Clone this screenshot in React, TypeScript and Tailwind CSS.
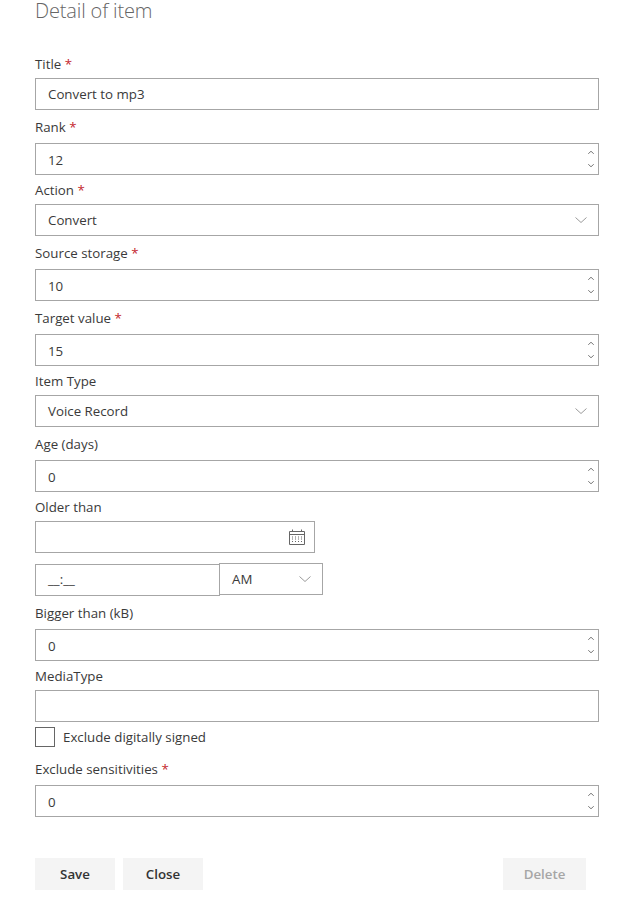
import React from "react";

const Chevron = ({ className, color, weight }: { className: string; color: string; weight: string }) => (
  <svg viewBox="0 0 12 6" fill="none" stroke={color} strokeWidth={weight} className={className}>
    <path d="M0.5 0.5 L6 5.5 L11.5 0.5" />
  </svg>
);

const Label = ({ text, required, className }: { text: string; required?: boolean; className: string }) => (
  <div className={`leading-5 text-[#3a3a3a] ${className}`}>
    {text}
    {required && <span className="text-[#c4262e]"> *</span>}
  </div>
);

const TextBox = ({ value }: { value?: string }) => (
  <div className="h-8 w-[564px] border border-[#a6a6a6] pl-3 pt-[2px] flex items-center text-[#3a3a3a]">{value}</div>
);

const NumberBox = ({ value }: { value: string }) => (
  <div className="h-8 w-[564px] border border-[#a6a6a6] pl-3 pr-1 flex items-center justify-between text-[#3a3a3a]">
    <span className="pt-[3px]">{value}</span>
    <div className="flex flex-col gap-[10px] items-center">
      <Chevron color="#555555" weight="1.6" className="w-[6px] h-[3px] rotate-180" />
      <Chevron color="#555555" weight="1.6" className="w-[6px] h-[3px]" />
    </div>
  </div>
);

const SelectBox = ({ value, className }: { value: string; className: string }) => (
  <div className={`h-8 border border-[#a6a6a6] pl-3 pr-[11px] flex items-center justify-between text-[#3a3a3a] ${className}`}>
    <span className="pt-px">{value}</span>
    <Chevron color="#8f8f8f" weight="0.9" className="w-3 h-[6px]" />
  </div>
);

const CalendarIcon = () => (
  <svg viewBox="0 0 16 16" fill="none" stroke="#666666" strokeWidth="1" className="w-4 h-4">
    <path d="M0.5 2.5 H15.5 V15.5 H0.5 Z" />
    <path d="M0.5 5.5 H15.5" />
    <path d="M3.5 0.5 V2.5 M12.5 0.5 V2.5" />
    <path d="M3 8 H4 M6 8 H7 M9 8 H10 M12 8 H13 M3 10 H4 M6 10 H7 M9 10 H10 M12 10 H13 M3 12.5 H4 M6 12.5 H7 M9 12.5 H10 M12 12.5 H13" />
  </svg>
);

const ActionButton = ({ text, className }: { text: string; className: string }) => (
  <div className={`h-8 bg-[#f4f4f4] pt-px flex items-center justify-center font-semibold ${className}`}>{text}</div>
);

export default function App() {
  return (
    <div className="w-[622px] h-[909px] overflow-hidden bg-white pl-[35px] font-['Open_Sans','Liberation_Sans',sans-serif] text-[13.3px]">
      <div className="h-[49px] text-xl leading-[22px] font-light text-[#666666] tracking-[-0.15px]">Detail of item</div>

      <Label text="Title" required className="h-[29px] pt-[5px]" />
      <TextBox value="Convert to mp3" />

      <Label text="Rank" required className="h-[33px] pt-[7px]" />
      <NumberBox value="12" />

      <Label text="Action" required className="h-[29px] pt-[5px]" />
      <SelectBox value="Convert" className="w-[564px]" />

      <Label text="Source storage" required className="h-[33px] pt-[7px]" />
      <NumberBox value="10" />

      <Label text="Target value" required className="h-[33px] pt-[7px]" />
      <NumberBox value="15" />

      <Label text="Item Type" className="h-[29px] pt-[5px]" />
      <SelectBox value="Voice Record" className="w-[564px]" />

      <Label text="Age (days)" className="h-[33px] pt-[7px]" />
      <NumberBox value="0" />

      <Label text="Older than" className="h-[29px] pt-[5px]" />
      <div className="h-8 w-[280px] border border-[#a6a6a6] pr-[9px] flex items-center justify-end">
        <CalendarIcon />
      </div>

      <div className="flex items-start mt-[10px] h-[33px]">
        <div className="h-8 w-[185px] mt-px border border-[#a6a6a6] pl-3 flex items-center text-[#3a3a3a]">__:__</div>
        <SelectBox value="AM" className="w-[104px] -ml-px" />
      </div>

      <Label text="Bigger than (kB)" className="h-[33px] pt-[7px]" />
      <NumberBox value="0" />

      <Label text="MediaType" className="h-[29px] pt-[5px]" />
      <TextBox />

      <div className="flex items-center gap-2 mt-[5px] h-5">
        <div className="w-5 h-5 border border-[#666666]" />
        <span className="text-[#3a3a3a] pt-px">Exclude digitally signed</span>
      </div>

      <Label text="Exclude sensitivities" required className="h-[38px] pt-3" />
      <NumberBox value="0" />

      <div className="flex mt-[41px] w-[551px]">
        <ActionButton text="Save" className="w-20 text-[#333333]" />
        <ActionButton text="Close" className="w-20 ml-2 text-[#333333]" />
        <ActionButton text="Delete" className="w-[83px] ml-auto text-[#a6a6a6]" />
      </div>
    </div>
  );
}
